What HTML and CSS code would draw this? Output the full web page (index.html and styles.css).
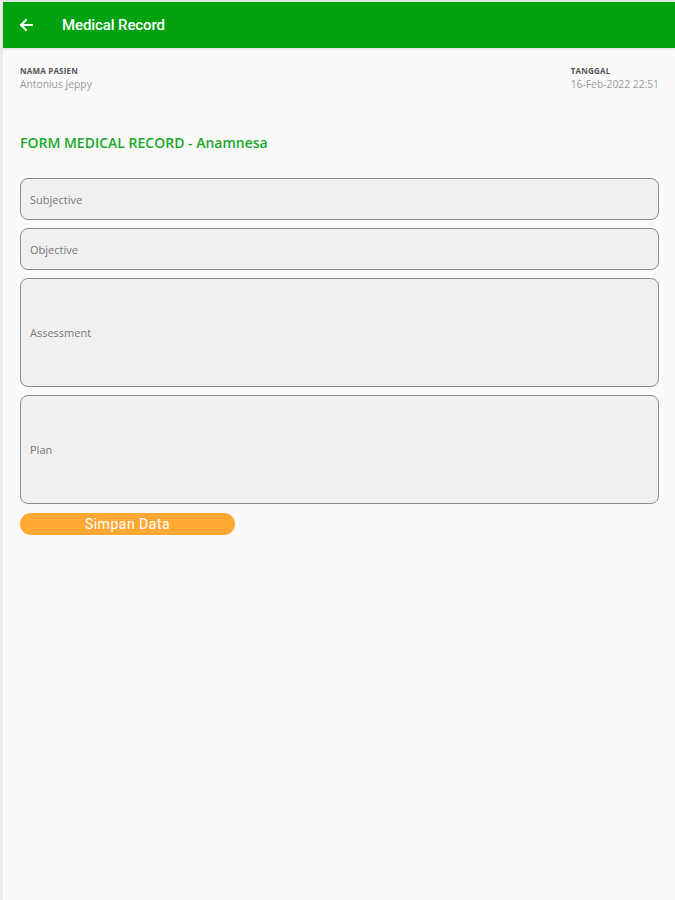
FILE: index.html
```html
<!DOCTYPE html>
<html lang="en">
<head>
    <meta charset="UTF-8">
    <meta name="viewport" content="width=device-width, initial-scale=1.0">
    <title>Medical Record</title>
    <link rel="stylesheet" href="styles.css">
</head>
<body>
    <div class="screen">
        <header class="app-bar">
            <button class="back-btn" aria-label="Back">
                <svg width="16" height="16" viewBox="0 0 16 16">
                    <path d="M14 8H3M8 3L3 8l5 5" fill="none" stroke="#fff" stroke-width="2" stroke-linecap="square"/>
                </svg>
            </button>
            <h1>Medical Record</h1>
        </header>

        <main class="content">
            <div class="patient-row">
                <div class="info">
                    <div class="info-label">NAMA PASIEN</div>
                    <div class="info-value">Antonius Jeppy</div>
                </div>
                <div class="info">
                    <div class="info-label">TANGGAL</div>
                    <div class="info-value">16-Feb-2022 22:51</div>
                </div>
            </div>

            <h2 class="form-title">FORM MEDICAL RECORD - Anamnesa</h2>

            <div class="form">
                <div class="field">Subjective</div>
                <div class="field">Objective</div>
                <div class="field field-tall">Assessment</div>
                <div class="field field-tall">Plan</div>
                <button class="save-btn">Simpan Data</button>
            </div>
        </main>
    </div>
</body>
</html>
```

FILE: styles.css
```css
body {
    margin: 0;
    font-family: "Open Sans", "Noto Sans", sans-serif;
    background-color: #fafafa;
    color: #333;
}
.screen {
    min-height: 898px;
    border-top: 2px solid #e6e6e6;
    border-left: 3px solid #ececec;
    background: #fafafa;
}
.app-bar {
    display: flex;
    align-items: center;
    height: 46px;
    background-color: #02a20f;
    box-shadow: 0 1px 3px rgba(0, 0, 0, 0.15);
}
.back-btn {
    display: flex;
    align-items: center;
    justify-content: center;
    width: 20px;
    height: 20px;
    margin-left: 13px;
    padding: 0;
    border: none;
    background: none;
}
.app-bar h1 {
    margin: 0 0 0 26px;
    font-family: Roboto, sans-serif;
    font-size: 15px;
    font-weight: 500;
    color: #fff;
    letter-spacing: -0.1px;
}
.content {
    padding: 17px 16px 0 17px;
}
.patient-row {
    display: flex;
    justify-content: space-between;
}
.info-label {
    font-size: 8px;
    font-weight: 700;
    color: #555;
    line-height: 11px;
    letter-spacing: 0.2px;
}
.info-value {
    margin-top: 2px;
    font-size: 10.3px;
    color: #9a9a9a;
    line-height: 13px;
}
.form-title {
    margin: 43px 0 0;
    font-size: 14px;
    font-weight: 600;
    color: #19a82a;
    line-height: 18px;
}
.form {
    display: flex;
    flex-direction: column;
    gap: 8px;
    margin-top: 26px;
}
.field {
    display: flex;
    align-items: center;
    height: 42px;
    padding: 0 9px;
    box-sizing: border-box;
    border: 1.5px solid #8c8c8c;
    border-radius: 8px;
    background: #f0f0f0;
    font-size: 11px;
    color: #777;
}
.field-tall {
    height: 109px;
}
.save-btn {
    width: 215px;
    height: 22px;
    margin-top: 1px;
    padding: 0;
    border: none;
    border-radius: 11px;
    background-color: #ffa834;
    color: #fff;
    font-family: Roboto, sans-serif;
    font-size: 14px;
    font-weight: 400;
    letter-spacing: 0.5px;
}
```
